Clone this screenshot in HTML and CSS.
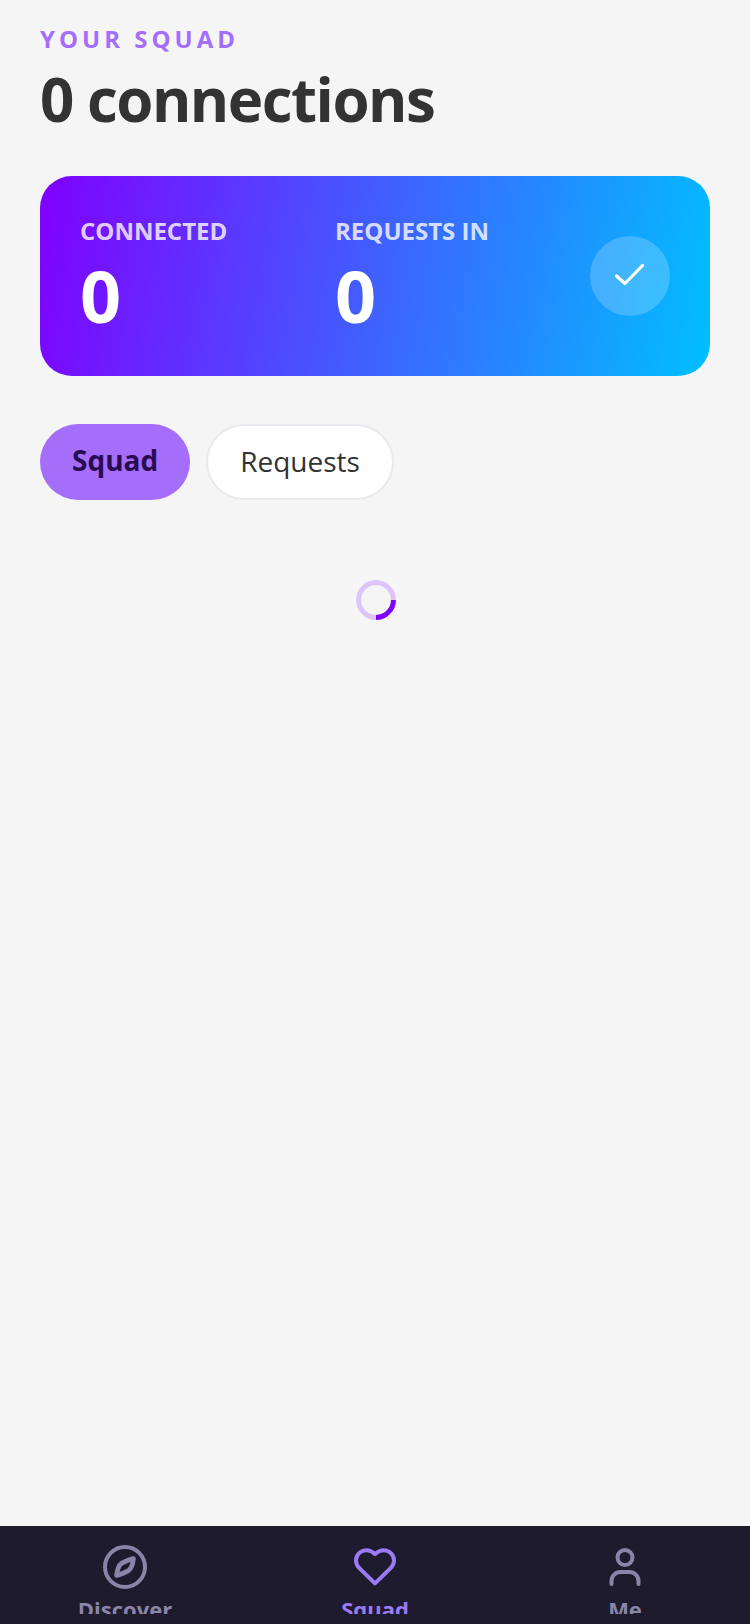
FILE: index.html
```html
<!DOCTYPE html>
<html lang="en">

<head>
    <meta charset="UTF-8">
    <meta name="viewport" content="width=device-width, initial-scale=1.0">
    <title>Your Squad</title>
    <link rel="stylesheet" href="styles.css">
</head>

<body>
    <main class="content">
        <div class="eyebrow">YOUR SQUAD</div>
        <h1 class="title">0 connections</h1>

        <section class="stats-card">
            <div class="stat">
                <div class="stat-label">CONNECTED</div>
                <div class="stat-value">0</div>
            </div>
            <div class="stat">
                <div class="stat-label">REQUESTS IN</div>
                <div class="stat-value">0</div>
            </div>
            <div class="stat-icon">
                <svg width="32" height="32" viewBox="0 0 32 32" fill="none" stroke="#fff" stroke-width="3.2" stroke-linecap="round" stroke-linejoin="round">
                    <path d="M2.5 16 L11 23.5 L28.5 5.5"/>
                </svg>
            </div>
        </section>

        <div class="tabs">
            <button class="tab active">Squad</button>
            <button class="tab">Requests</button>
        </div>

        <div class="loading">
            <div class="spinner"></div>
        </div>
    </main>

    <nav class="bottom-nav">
        <div class="nav-item">
            <svg class="nav-icon" width="48" height="48" viewBox="0 0 24 24" fill="none" stroke="currentColor" stroke-width="2" stroke-linecap="round" stroke-linejoin="round">
                <circle cx="12" cy="12" r="10"/>
                <path stroke-width="2.4" d="M16.2 7.8 C15.9 10.6 15 13 13.8 13.8 C11.6 15 9.8 15.8 7.8 16.2 C8.1 13.6 9 11 10.2 10.2 C12.4 9 14.2 8.2 16.2 7.8 Z"/>
            </svg>
            <span class="nav-label">Discover</span>
        </div>
        <div class="nav-item active">
            <svg class="nav-icon" width="48" height="48" viewBox="0 0 24 24" fill="none" stroke="currentColor" stroke-width="2" stroke-linecap="round" stroke-linejoin="round">
                <path d="M12 20.2 L4.3 12.7 C3 11.4 2.5 10 2.5 8.7 A5.2 5.2 0 0 1 7.7 3.6 C9.3 3.6 10.6 4.2 12 5.6 C13.4 4.2 14.7 3.6 16.3 3.6 A5.2 5.2 0 0 1 21.5 8.7 C21.5 10 21 11.4 19.7 12.7 Z"/>
            </svg>
            <span class="nav-label">Squad</span>
        </div>
        <div class="nav-item">
            <svg class="nav-icon" width="48" height="48" viewBox="0 0 24 24" fill="none" stroke="currentColor" stroke-width="2" stroke-linecap="round" stroke-linejoin="round">
                <circle cx="12" cy="7.25" r="3.75"/>
                <path d="M5.25 20.5 V19 A4.5 4.5 0 0 1 9.75 14.5 H14.25 A4.5 4.5 0 0 1 18.75 19 V20.5"/>
            </svg>
            <span class="nav-label">Me</span>
        </div>
    </nav>
</body>

</html>
```

FILE: styles.css
```css
* {
    box-sizing: border-box;
}

body {
    font-family: 'Open Sans', 'Noto Sans', sans-serif;
    margin: 0;
    background-color: #F5F5F5;
    display: flex;
    flex-direction: column;
    height: 1624px;
    overflow: hidden;
}

.content {
    flex: 1;
    padding: 23px 40px 0;
}

.eyebrow {
    font-size: 24px;
    line-height: 32px;
    font-weight: 700;
    letter-spacing: 4px;
    color: #A46EFB;
}

.title {
    font-size: 60px;
    line-height: 72px;
    font-weight: 700;
    letter-spacing: -1.5px;
    color: #333;
    margin: 8px 0 0;
}

.stats-card {
    display: flex;
    align-items: center;
    height: 200px;
    margin-top: 41px;
    padding: 0 40px;
    border-radius: 32px;
    background: linear-gradient(100deg, #8000FF 0%, #00BFFF 100%);
}

.stat {
    width: 255px;
}

.stat-label {
    font-size: 24px;
    line-height: 32px;
    font-weight: 700;
    color: rgba(255, 255, 255, 0.8);
    margin-bottom: 6px;
}

.stat-value {
    font-size: 72px;
    line-height: 84px;
    font-weight: 700;
    color: #fff;
}

.stat-icon {
    width: 80px;
    height: 80px;
    margin-left: auto;
    border-radius: 50%;
    background-color: rgba(255, 255, 255, 0.2);
    display: flex;
    justify-content: center;
    align-items: center;
}

.tabs {
    display: flex;
    align-items: center;
    gap: 16px;
    margin-top: 48px;
}

.tab {
    font-family: inherit;
    font-size: 28px;
    height: 76px;
    padding: 0 32px 3px;
    border: 2px solid #E8E8EE;
    border-radius: 38px;
    background-color: #fff;
    color: #333;
}

.tab.active {
    font-weight: 700;
    border: none;
    padding-bottom: 5px;
    background-color: #A46EFB;
    color: #2A0A52;
}

.loading {
    display: flex;
    justify-content: center;
    margin-top: 80px;
    padding-left: 2px;
}

.spinner {
    width: 40px;
    height: 40px;
    border: 5px solid rgba(128, 0, 255, 0.2);
    border-right-color: #8000FF;
    border-radius: 50%;
    transform: rotate(45deg);
}

.bottom-nav {
    display: flex;
    height: 98px;
    padding-top: 17px;
    align-items: flex-start;
    background-color: #1E1B2E;
}

.nav-item {
    flex: 1;
    height: 71px;
    overflow: hidden;
    display: flex;
    flex-direction: column;
    align-items: center;
    color: #8A84A6;
}

.nav-item.active {
    color: #9B7AF5;
}

.nav-icon {
    flex-shrink: 0;
}

.nav-label {
    font-size: 22px;
    line-height: 30px;
    font-weight: 700;
    margin-top: 3px;
}
```
